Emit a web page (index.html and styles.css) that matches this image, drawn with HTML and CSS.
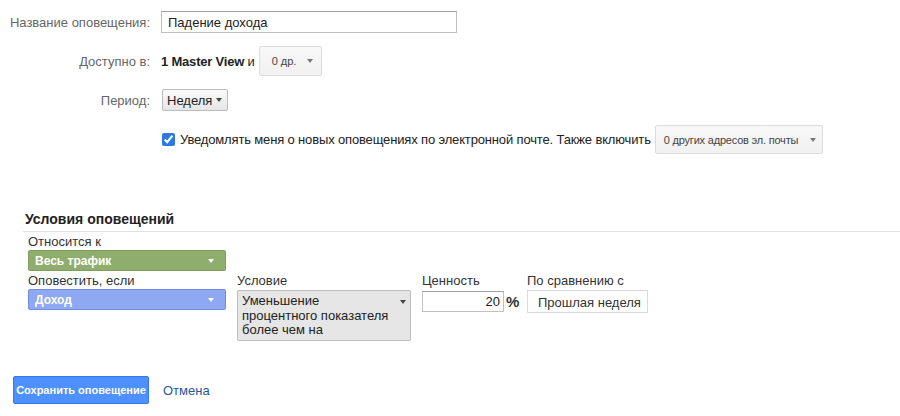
FILE: index.html
```html
<!DOCTYPE html>
<html lang="ru">
<head>
    <meta charset="UTF-8">
    <title>Оповещение</title>
    <link rel="stylesheet" href="styles.css">
</head>
<body>

    <div class="settings">
        <div class="row row-name">
            <span class="label">Название оповещения:</span>
            <input class="text-input name-input" type="text" value="Падение дохода">
        </div>

        <div class="row row-views">
            <span class="label">Доступно в:</span>
            <span class="views"><b>1 Master View</b> и</span>
            <span class="btn-menu views-btn">0 др. <i class="arrow"></i></span>
        </div>

        <div class="row row-period">
            <span class="label">Период:</span>
            <span class="period-select">Неделя <i class="arrow dark"></i></span>
        </div>

        <div class="row row-email">
            <span class="label"></span>
            <input class="check" type="checkbox" checked>
            <span class="email-text">Уведомлять меня о новых оповещениях по электронной почте. Также включить</span>
            <span class="btn-menu email-btn">0 других адресов эл. почты <i class="arrow"></i></span>
        </div>
    </div>

    <div class="conditions">
        <h3 class="conditions-title">Условия оповещений</h3>

        <div class="conditions-body">
            <div class="field">
                <div class="field-label">Относится к</div>
                <div class="pill green">Весь трафик <i class="arrow white"></i></div>
            </div>

            <div class="cond-row">
                <div class="col col-metric">
                    <div class="field-label">Оповестить, если</div>
                    <div class="pill blue">Доход <i class="arrow white"></i></div>
                </div>
                <div class="col col-cond">
                    <div class="field-label">Условие</div>
                    <div class="cond-select">
                        <span>Уменьшение процентного показателя более чем на</span>
                        <i class="arrow dark"></i>
                    </div>
                </div>
                <div class="col col-value">
                    <div class="field-label">Ценность</div>
                    <div class="value-wrap">
                        <input class="text-input value-input" type="text" value="20">
                        <span class="percent">%</span>
                    </div>
                </div>
                <div class="col col-compare">
                    <div class="field-label">По сравнению с</div>
                    <div class="compare-box">Прошлая неделя</div>
                </div>
            </div>
        </div>
    </div>

    <div class="actions">
        <button class="save-btn" type="button">Сохранить оповещение</button>
        <a class="cancel" href="#">Отмена</a>
    </div>

</body>
</html>
```

FILE: styles.css
```css
body {
    font-family: "Liberation Sans", Arial, sans-serif;
    font-size: 13px;
    color: #222;
    background: #fff;
    margin: 0;
}

.settings {
    padding-top: 11px;
}

.row {
    display: flex;
    align-items: center;
}

.label {
    width: 150px;
    margin-right: 11px;
    text-align: right;
    color: #666;
    flex-shrink: 0;
}

.row-views {
    margin-top: 13px;
}

.row-period {
    margin-top: 13px;
}

.row-email {
    margin-top: 14px;
}

.text-input {
    font-family: "Liberation Sans", Arial, sans-serif;
    font-size: 13px;
    color: #222;
    border: 1px solid #c0c0c0;
    border-top-color: #a0a0a0;
    box-sizing: border-box;
    margin: 0;
    outline: none;
}

.name-input {
    width: 296px;
    height: 22px;
    padding: 0 6px;
}

.views {
    margin-right: 4px;
    letter-spacing: -0.2px;
}

.btn-menu {
    display: inline-flex;
    align-items: center;
    box-sizing: border-box;
    border: 1px solid #dcdcdc;
    border-radius: 2px;
    background: linear-gradient(#f8f8f8, #f1f1f1);
    color: #444;
    font-size: 11px;
}

.views-btn {
    height: 30px;
    width: 63px;
    padding-left: 12px;
}

.views-btn .arrow {
    margin-left: 11px;
}

.arrow {
    display: inline-block;
    width: 0;
    height: 0;
    border-left: 3px solid transparent;
    border-right: 3px solid transparent;
    border-top: 4px solid #777;
}

.arrow.dark {
    border-top-color: #444;
}

.arrow.white {
    border-top-color: #fff;
}

.period-select {
    display: inline-flex;
    align-items: center;
    height: 22px;
    box-sizing: border-box;
    padding: 0 5px 0 4px;
    margin-left: 1px;
    border: 1px solid #bbb;
    border-radius: 2px;
    background: linear-gradient(#fafafa, #e6e6e6);
    font-size: 13px;
}

.period-select .arrow {
    margin-left: 4px;
}

.check {
    width: 13px;
    height: 13px;
    margin: 0 5px 0 1px;
    accent-color: #2a7ae2;
}

.email-text {
    color: #222;
    letter-spacing: -0.15px;
}

.email-btn {
    height: 29px;
    width: 168px;
    margin-left: 4px;
    padding-left: 8px;
    letter-spacing: -0.2px;
}

.email-btn .arrow {
    margin-left: 12px;
}

.conditions {
    margin-top: 57px;
    margin-left: 23px;
}

.conditions-title {
    margin: 0;
    padding-left: 2px;
    font-size: 14px;
    line-height: 17px;
    padding-bottom: 3px;
    border-bottom: 1px solid #e0e0e0;
    color: #222;
}

.conditions-body {
    padding-left: 5px;
}

.field-label {
    line-height: 16px;
    margin-top: 2px;
    color: #333;
}

.pill {
    display: flex;
    align-items: center;
    justify-content: space-between;
    box-sizing: border-box;
    width: 198px;
    height: 21px;
    padding: 0 11px 0 6px;
    border-radius: 2px;
    color: #fff;
    font-weight: bold;
    font-size: 12px;
}

.green {
    background: #8fad6c;
    border: 1px solid #7f9c5d;
}

.blue {
    background: #8ea8f2;
    border: 1px solid #6f8ce0;
}

.cond-row {
    display: flex;
    gap: 11px;
}

.col-metric {
    width: 198px;
}

.cond-select {
    display: flex;
    align-items: flex-start;
    justify-content: space-between;
    box-sizing: border-box;
    width: 174px;
    height: 51px;
    margin-top: 1px;
    padding: 3px 4px 0 4px;
    border: 1px solid #bdbdbd;
    border-radius: 2px;
    background: #e6e6e6;
    line-height: 14.5px;
}

.cond-select span {
    width: 150px;
}

.cond-select .arrow {
    margin-top: 6px;
}

.col-value {
    width: 94px;
}

.value-wrap {
    display: flex;
    align-items: center;
    margin-top: 2px;
}

.value-input {
    width: 82px;
    height: 21px;
    padding: 0 3px;
    text-align: right;
}

.percent {
    font-size: 15px;
    font-weight: bold;
    color: #333;
    margin-left: 2px;
}

.compare-box {
    box-sizing: border-box;
    width: 121px;
    height: 23px;
    margin-top: 1px;
    padding: 4px 0 0 10px;
    border: 1px solid #d9d9d9;
    color: #333;
    white-space: nowrap;
}

.actions {
    display: flex;
    align-items: center;
    margin: 35px 0 0 13px;
}

.save-btn {
    height: 28px;
    width: 136px;
    padding: 0;
    border: 1px solid #3079ed;
    border-radius: 2px;
    background: #4d90fe;
    color: #fff;
    font-family: "Liberation Sans", Arial, sans-serif;
    font-size: 11px;
    font-weight: bold;
}

.cancel {
    margin-left: 14px;
    color: #2b5797;
    text-decoration: none;
    font-size: 13px;
}
```
